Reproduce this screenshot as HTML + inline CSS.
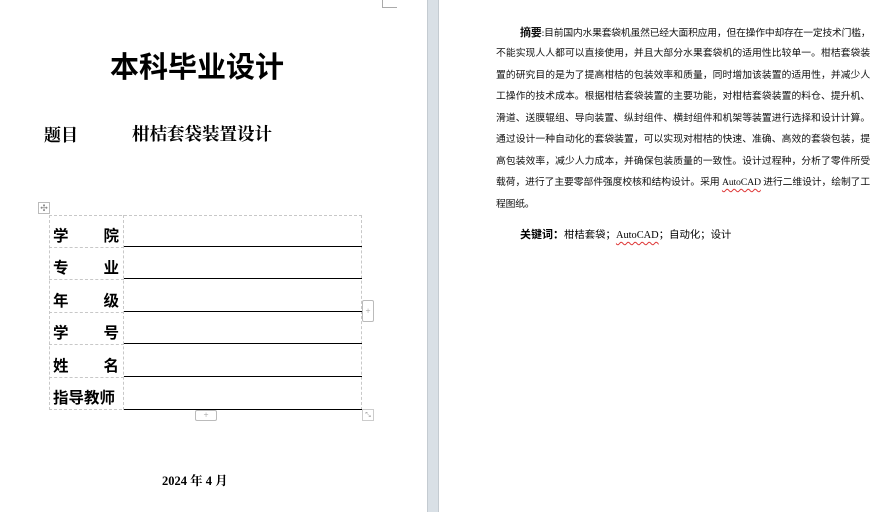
<!DOCTYPE html>
<html><head><meta charset="utf-8"><style>
body{margin:0;width:887px;height:512px;overflow:hidden;background:#fff;position:relative;font-family:"Liberation Serif","Noto Serif CJK SC",serif;}
.a{position:absolute;white-space:nowrap;}
.gap{position:absolute;left:427px;top:0;width:12px;height:512px;background:#d9e0e6;border-left:1px solid #c4cbd1;border-right:1px solid #c4cbd1;box-sizing:border-box;}
.cm{position:absolute;border-color:#aaa;border-style:solid;width:14px;height:8px;}
.lbl{position:absolute;left:53px;width:66px;font-size:15.5px;font-weight:bold;display:flex;justify-content:space-between;font-family:"Noto Sans CJK SC",sans-serif;}
.ul{position:absolute;left:124px;width:238px;height:0;border-top:1.5px solid #000;}
.ln{position:absolute;left:496px;width:374px;font-size:9.8px;line-height:14px;height:14px;font-family:"Liberation Serif","Noto Sans CJK SC",sans-serif;text-align:justify;text-align-last:justify;color:#111;white-space:nowrap;letter-spacing:-0.2px;}
.w{text-decoration:underline wavy #d33;text-underline-offset:3px;text-decoration-thickness:1px;}
</style></head><body>
<div class="cm" style="left:382px;top:-1px;border-width:0 0 1px 1px;"></div>
<div class="gap"></div>
<div class="a" style="left:110px;top:44px;font-size:29px;font-weight:bold;font-family:'Noto Sans CJK SC',sans-serif;">本科毕业设计</div>
<div class="a" style="left:44px;top:121px;font-size:17px;font-weight:bold;font-family:'Noto Serif CJK SC',serif;">题目</div>
<div class="a" style="left:132px;top:121px;font-size:17.5px;font-weight:bold;font-family:'Noto Serif CJK SC',serif;">柑桔套袋装置设计</div>
<div class="a" style="left:38px;top:202px;width:10px;height:10px;border:1px solid #bbb;font-size:9px;line-height:10px;text-align:center;color:#888;">✣</div>
<div class="a" style="left:49px;top:215px;width:313px;height:195px;border:1px dashed #c8c8c8;box-sizing:border-box;"></div>
<div class="a" style="left:123px;top:215px;height:195px;border-left:1px dashed #c8c8c8;"></div>
<div class="a" style="left:49px;top:247px;width:75px;border-top:1px dashed #c8c8c8;"></div>
<div class="a" style="left:49px;top:279px;width:75px;border-top:1px dashed #c8c8c8;"></div>
<div class="a" style="left:49px;top:312px;width:75px;border-top:1px dashed #c8c8c8;"></div>
<div class="a" style="left:49px;top:344px;width:75px;border-top:1px dashed #c8c8c8;"></div>
<div class="a" style="left:49px;top:377px;width:75px;border-top:1px dashed #c8c8c8;"></div>
<div class="lbl" style="top:224px"><span>学</span><span>院</span></div>
<div class="lbl" style="top:256px"><span>专</span><span>业</span></div>
<div class="lbl" style="top:289px"><span>年</span><span>级</span></div>
<div class="lbl" style="top:321px"><span>学</span><span>号</span></div>
<div class="lbl" style="top:354px"><span>姓</span><span>名</span></div>
<div class="lbl" style="top:386px"><span>指导教师</span></div>
<div class="ul" style="top:246px"></div><div class="ul" style="top:278px"></div><div class="ul" style="top:311px"></div>
<div class="ul" style="top:343px"></div><div class="ul" style="top:376px"></div><div class="ul" style="top:409px"></div>
<div class="a" style="left:362px;top:300px;width:10px;height:20px;border:1px solid #bbb;border-radius:2px;font-size:9px;color:#999;text-align:center;line-height:20px;">+</div>
<div class="a" style="left:195px;top:410px;width:20px;height:9px;border:1px solid #bbb;border-radius:2px;font-size:9px;color:#999;text-align:center;line-height:9px;">+</div>
<div class="a" style="left:362px;top:409px;width:10px;height:10px;border:1px solid #ccc;font-size:7px;color:#999;text-align:center;line-height:10px;">⤡</div>
<div class="a" style="left:162px;top:471px;font-size:12.5px;font-weight:bold;">2024 年 4 月</div>
<div class="ln" style="top:26px;left:520px;width:350px;"><b style="font-size:11px">摘要</b>:目前国内水果套袋机虽然已经大面积应用，但在操作中却存在一定技术门槛，</div>
<div class="ln" style="top:47px">不能实现人人都可以直接使用，并且大部分水果套袋机的适用性比较单一。柑桔套袋装</div>
<div class="ln" style="top:69px">置的研究目的是为了提高柑桔的包装效率和质量，同时增加该装置的适用性，并减少人</div>
<div class="ln" style="top:90px">工操作的技术成本。根据柑桔套袋装置的主要功能，对柑桔套袋装置的料仓、提升机、</div>
<div class="ln" style="top:112px">滑道、送膜辊组、导向装置、纵封组件、横封组件和机架等装置进行选择和设计计算。</div>
<div class="ln" style="top:133px">通过设计一种自动化的套袋装置，可以实现对柑桔的快速、准确、高效的套袋包装，提</div>
<div class="ln" style="top:155px">高包装效率，减少人力成本，并确保包装质量的一致性。设计过程种，分析了零件所受</div>
<div class="ln" style="top:176px">载荷，进行了主要零部件强度校核和结构设计。采用 <span class="w">AutoCAD</span> 进行二维设计，绘制了工</div>
<div class="ln" style="top:198px;text-align-last:left;">程图纸。</div>
<div class="a" style="left:520px;top:226px;font-size:10.4px;font-family:'Liberation Serif','Noto Sans CJK SC',sans-serif;"><b style="font-size:11px">关键词：</b>柑桔套袋；<span class="w">AutoCAD</span>；自动化；设计</div>
</body></html>
